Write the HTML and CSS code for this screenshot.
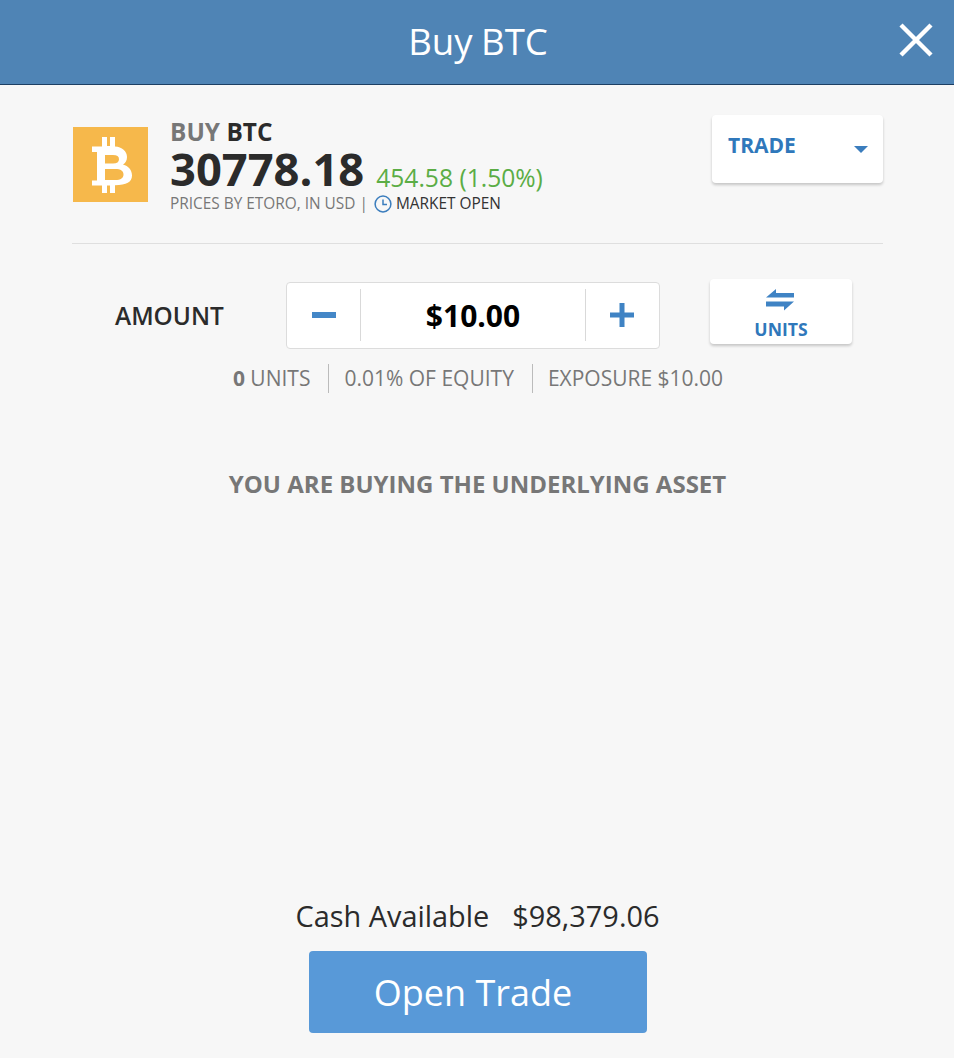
FILE: index.html
```html
<!DOCTYPE html>
<html lang="en">
<head>
<meta charset="utf-8">
<title>Buy BTC</title>
<link rel="stylesheet" href="styles.css">
</head>
<body>
<div class="app">
  <header class="header">
    <h1 class="title">Buy BTC</h1>
    <button class="close" aria-label="Close">
      <svg width="34" height="34" viewBox="0 0 34 34"><path d="M2 2 L32 32 M32 2 L2 32" stroke="#fff" stroke-width="4.4" fill="none"/></svg>
    </button>
  </header>
  <main class="main">
    <section class="instrument">
      <div class="logo">
        <svg width="40" height="56" viewBox="0 0 40 56">
          <path fill="#fff" fill-rule="evenodd" d="M10 0h5v9h3V0h5v9.500C30 10 35 14 35 20c0 3.500-1.500 6-4 7.500 5.500 1.500 9 5.500 9 11 0 6.500-5.500 9.500-17 9.800V56h-5v-7.500h-3V56h-5v-7.500H0v-5h5V15H0V9.500h10zM13 18v8.500h8c4 0 6-1.500 6-4.300S25 18 21 18zM13 32v11h10c6 0 8.500-2 8.500-5.500S29 32 23 32z"/>
        </svg>
      </div>
      <div class="quote">
        <div class="quote-title"><span class="buy">BUY</span> BTC</div>
        <div class="price-row"><span class="price">30778.18</span><span class="change">454.58 (1.50%)</span></div>
        <div class="meta">
          <span>PRICES BY ETORO, IN USD |</span>
          <svg class="clock" width="18" height="18" viewBox="0 0 18 18"><circle cx="9" cy="9" r="7.900" fill="none" stroke="#3b7dbd" stroke-width="1.500"/><path d="M9 4.500V9.500H13" fill="none" stroke="#3b7dbd" stroke-width="1.500"/></svg>
          <span class="open">MARKET OPEN</span>
        </div>
      </div>
      <button class="trade-select">
        <span>TRADE</span>
        <svg width="14" height="7" viewBox="0 0 14 7"><path d="M0 0H14L7 7Z" fill="#3b7dbd"/></svg>
      </button>
    </section>
    <section class="amount-row">
      <div class="amount-label">AMOUNT</div>
      <div class="stepper">
        <div class="step">
          <svg width="24" height="6" viewBox="0 0 24 6"><rect width="24" height="6" fill="#4487c7"/></svg>
        </div>
        <div class="value">$10.00</div>
        <div class="step step-plus">
          <svg width="24" height="24" viewBox="0 0 24 24"><path d="M9.500 0h5v9.500H24v5h-9.500V24h-5v-9.500H0v-5h9.500z" fill="#3f83c4"/></svg>
        </div>
      </div>
      <button class="units">
        <svg width="28" height="22" viewBox="0 0 28 22"><path d="M10 0V4H28V8.500H0Z M0 12.500H28L18 21.500V17.500H0Z" fill="#3f83c4"/></svg>
        <span>UNITS</span>
      </button>
    </section>
    <ul class="stats">
      <li class="stat"><b>0</b> UNITS</li>
      <li class="stat">0.01% OF EQUITY</li>
      <li class="stat">EXPOSURE $10.00</li>
    </ul>
    <p class="notice">YOU ARE BUYING THE UNDERLYING ASSET</p>
    <div class="footer">
      <div class="cash"><span>Cash Available</span><span>$98,379.06</span></div>
      <button class="open-trade">Open Trade</button>
    </div>
  </main>
</div>
</body>
</html>
```

FILE: styles.css
```css
* { box-sizing: border-box; }
html, body { margin: 0; height: 100%; }
body { background: #f7f7f7; font-family: "Open Sans", sans-serif; color: #2b2b2b; }
button { font-family: inherit; border: 0; padding: 0; cursor: pointer; }
.app { display: flex; flex-direction: column; height: 1058px; overflow: hidden; }
.header { flex: none; height: 85px; background: #4f84b5; border-bottom: 1px solid #1d3f63; display: flex; align-items: center; justify-content: center; position: relative; }
.title { margin: 0 0 2px 2px; font-size: 36.6px; font-weight: 400; color: #fff; word-spacing: -1px; }
.close { position: absolute; right: 21px; top: 23px; width: 34px; height: 34px; background: none; display: block; }
.close svg { display: block; }
.main { flex: 1; display: flex; flex-direction: column; padding: 0 71px 0 72px; }
.instrument { position: relative; height: 159px; border-bottom: 1px solid #dfdfdf; display: flex; padding: 42px 0 0 1px; }
.logo { width: 75px; height: 75px; background: #f6b84b; display: flex; align-items: center; justify-content: center; flex: none; padding-left: 3px; }
.quote { margin-left: 22px; margin-top: -10px; }
.quote-title { font-size: 24.400px; font-weight: 700; line-height: 30px; color: #2b2b2b; }
.buy { color: #777; }
.price-row { margin-top: -3px; line-height: 50px; height: 48px; white-space: nowrap; }
.price { font-size: 45.300px; font-weight: 700; color: #2b2b2b; }
.change { font-size: 24.600px; color: #5bad45; margin-left: 12px; vertical-align: -1px; }
.meta { display: flex; align-items: center; font-size: 15.400px; color: #777; line-height: 18px; margin-top: 3px; }
.clock { margin: 0 4px 0 6px; }
.open { color: #333; }
.trade-select { position: absolute; right: 0; top: 30px; width: 171px; height: 68px; background: #fff; border-radius: 4px; box-shadow: 0 2px 3px rgba(0,0,0,.2); display: block; color: #2f78bb; font-size: 21px; font-weight: 700; text-align: left; }
.trade-select span { position: absolute; left: 16px; top: 15px; line-height: 30px; }
.trade-select svg { position: absolute; right: 15px; top: 31px; }
.amount-row { display: flex; align-items: center; height: 68px; margin-top: 37px; }
.amount-label { width: 214px; padding-left: 43px; font-size: 24.400px; font-weight: 600; color: #2b2b2b; margin-top: 1px; }
.stepper { width: 374px; height: 67px; background: #fff; border: 1px solid #dcdcdc; border-radius: 4px; display: flex; align-items: center; }
.step { width: 73px; height: 52px; display: flex; align-items: center; justify-content: center; flex: none; }
.step-plus { padding-right: 2px; }
.value { flex: 1; height: 52px; border: solid #d9d9d9; border-width: 0 1px; text-align: center; font-size: 30px; font-weight: 700; color: #000; line-height: 54px; }
.units { margin-left: 50px; width: 142px; height: 65px; background: #fff; border-radius: 4px; box-shadow: 0 2px 3px rgba(0,0,0,.2); display: flex; flex-direction: column; align-items: center; color: #2f78bb; font-size: 17.600px; font-weight: 700; padding-top: 10px; line-height: 22px; gap: 7px; margin-top: -8px; }
.units svg { margin-right: 2px; }
.stats { list-style: none; margin: 15px 0 0; padding: 0 0 0 4px; display: flex; justify-content: center; font-size: 21px; color: #777; height: 29px; line-height: 29px; }
.stat { padding: 0 18px 0 15px; border-left: 1px solid #bbb; }
.stat:first-child { border-left: 0; }
.notice { margin: 75px 0 0; text-align: center; font-size: 24px; font-weight: 700; color: #777; line-height: 31px; }
.footer { margin-top: auto; padding-bottom: 25px; display: flex; flex-direction: column; align-items: center; }
.cash { display: flex; gap: 23px; font-size: 28.900px; line-height: 35px; color: #2b2b2b; }
.open-trade { margin-top: 18px; width: 338px; height: 82px; background: #5899d8; color: #fff; font-size: 36px; border-radius: 4px; padding-right: 9px; }
```
